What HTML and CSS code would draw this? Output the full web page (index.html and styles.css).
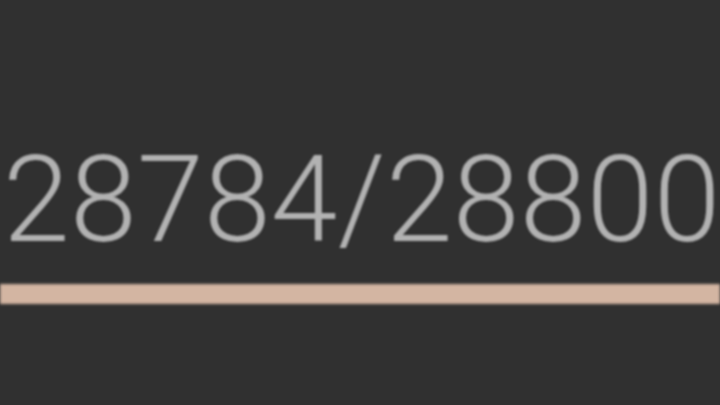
FILE: index.html
```html
<!DOCTYPE html>
<html lang="en">
<head>
<meta charset="utf-8">
<title>Progress</title>
<link rel="stylesheet" href="styles.css">
</head>
<body>
<main class="counter">
  <div class="counter-value">28784/28800</div>
  <div class="counter-track"><div class="counter-fill" style="width: 99.94%"></div></div>
</main>
</body>
</html>
```
FILE: styles.css
```css
html, body {
  margin: 0;
  height: 100%;
  background: #303030;
}

.counter {
  display: flex;
  flex-direction: column;
  padding-top: 140px;
  gap: 24px;
}

.counter-value {
  font-family: Roboto, "Noto Sans", sans-serif;
  font-weight: 300;
  font-size: 120px;
  line-height: 120px;
  color: #b2b2b2;
  white-space: nowrap;
  padding-left: 3px;
  letter-spacing: 0.4px;
  filter: blur(1px);
}

.counter-track {
  height: 20px;
  background: #3a3532;
  filter: blur(1.5px);
}

.counter-fill {
  height: 100%;
  background: #d3b5a2;
}
```
